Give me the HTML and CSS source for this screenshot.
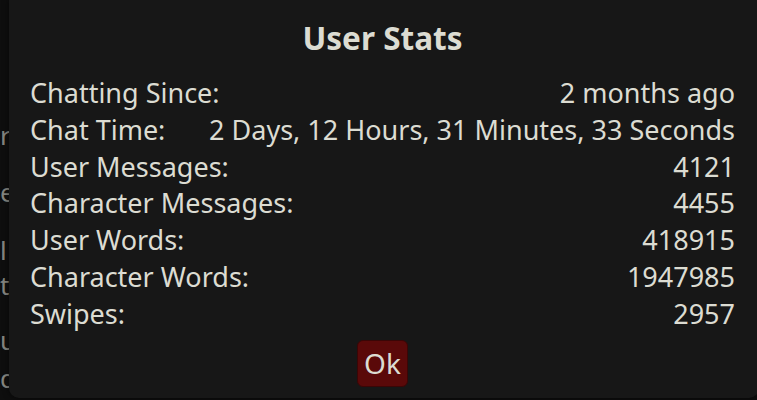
FILE: index.html
```html
<!DOCTYPE html>
<html>
<head>
<meta charset="utf-8">
<link rel="stylesheet" href="styles.css">
</head>
<body>
<div class="backdrop">
  <p class="bg-line l1">r</p>
  <p class="bg-line l2">er</p>
  <p class="bg-line l3">l</p>
  <p class="bg-line l4">t,</p>
  <p class="bg-line l5">u</p>
  <p class="bg-line l6">d</p>
</div>
<div class="dialog">
  <h3 class="title">User Stats</h3>
  <div class="stats">
    <div class="row"><span>Chatting Since:</span><span>2 months ago</span></div>
    <div class="row"><span>Chat Time:</span><span>2 Days, 12 Hours, 31 Minutes, 33 Seconds</span></div>
    <div class="row"><span>User Messages:</span><span>4121</span></div>
    <div class="row"><span>Character Messages:</span><span>4455</span></div>
    <div class="row"><span>User Words:</span><span>418915</span></div>
    <div class="row"><span>Character Words:</span><span>1947985</span></div>
    <div class="row"><span>Swipes:</span><span>2957</span></div>
  </div>
  <div class="actions"><button class="ok">Ok</button></div>
</div>
</body>
</html>
```

FILE: styles.css
```css
html, body {
  margin: 0;
  padding: 0;
  height: 100%;
}
body {
  background: #0e0e0e;
  font-family: "Noto Sans", "Open Sans", sans-serif;
  color: #dcdcd2;
  overflow: hidden;
  position: relative;
}
.backdrop {
  display: flex;
  flex-direction: column;
  padding-top: 120px;
  color: #85857f;
  font-size: 26px;
}
.bg-line {
  margin: 0;
  line-height: 30px;
}
.l2 { margin-top: 27px; }
.l3 { margin-top: 28px; }
.l4 { margin-top: 5px; }
.l5 { margin-top: 25px; }
.l6 { margin-top: 8px; }
.dialog {
  position: absolute;
  left: 9px;
  top: 0;
  right: -2px;
  bottom: 2px;
  background: #171717;
  border-radius: 0 0 10px 10px;
  padding: 15px 24px 0 21px;
  box-sizing: border-box;
  display: flex;
  flex-direction: column;
  box-shadow: 0 0 6px rgba(0,0,0,0.6);
}
.title {
  margin: 0;
  text-align: center;
  font-size: 31.5px;
  font-weight: 700;
  line-height: 46px;
}
.stats {
  margin-top: 14px;
  display: flex;
  flex-direction: column;
}
.row {
  display: flex;
  justify-content: space-between;
  font-size: 27px;
  line-height: 36.8px;
}
.actions {
  display: flex;
  justify-content: center;
  margin-top: 7px;
}
.ok {
  font-family: "Noto Sans", "Open Sans", sans-serif;
  font-size: 28px;
  color: #dcdcd2;
  background: #5a0909;
  border: 1px solid #3a0606;
  border-radius: 6px;
  width: 51px;
  height: 47px;
  padding: 0;
  line-height: 44px;
}
```
